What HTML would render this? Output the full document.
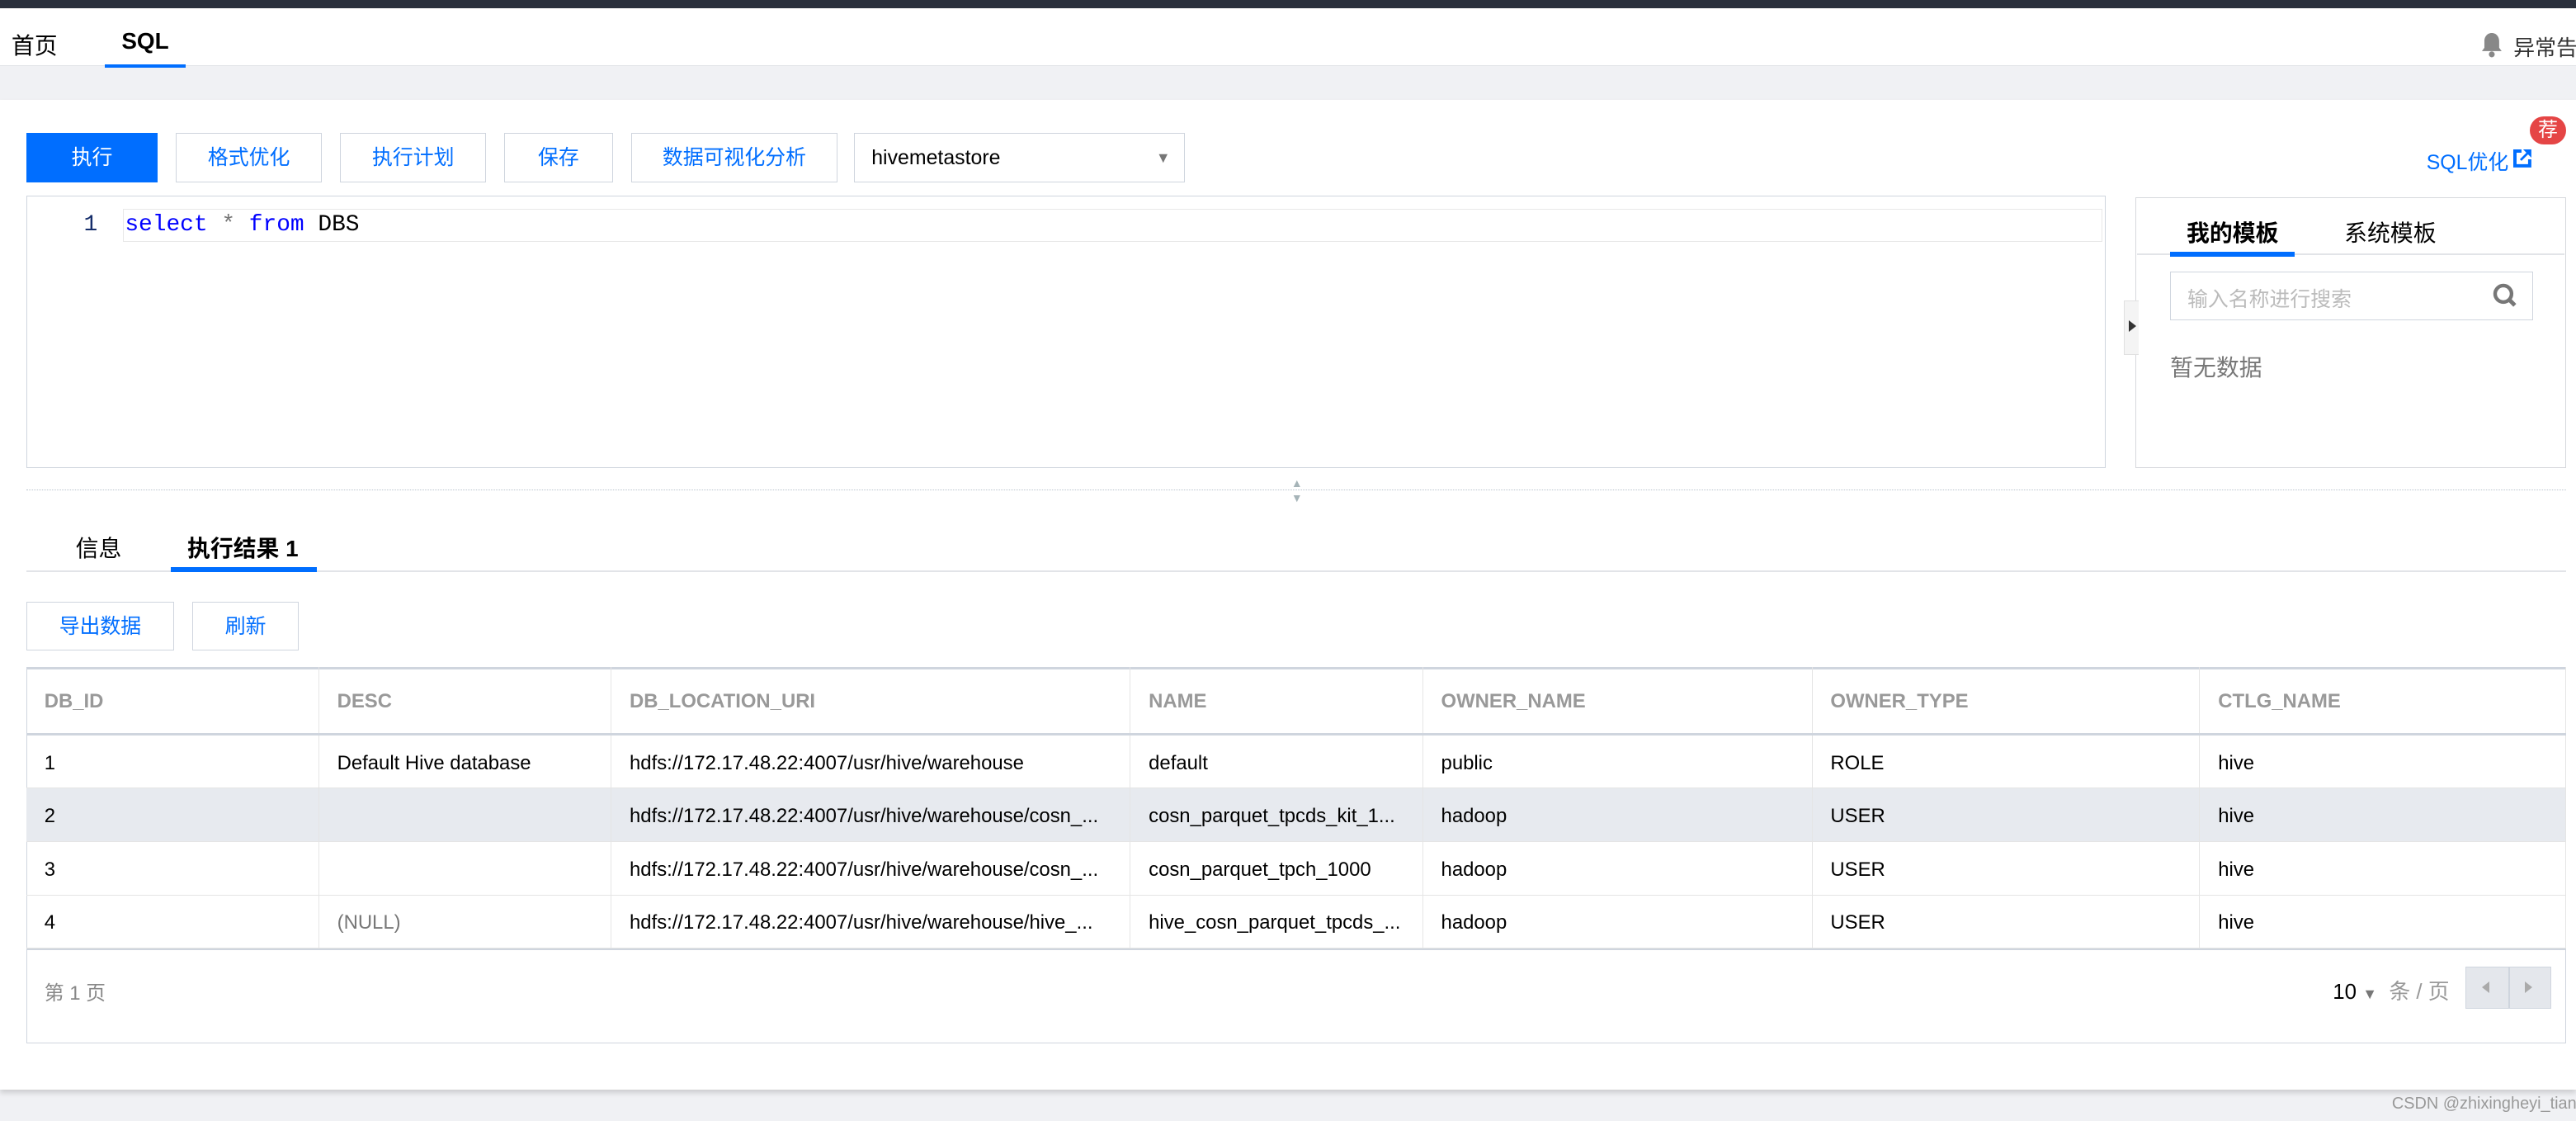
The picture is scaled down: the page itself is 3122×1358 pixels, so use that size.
<!DOCTYPE html>
<html><head><meta charset="utf-8"><style>
*{box-sizing:border-box;margin:0;padding:0}
html,body{width:3122px;height:1358px;overflow:hidden;background:#f0f1f4}
#w{zoom:1.991;position:relative;width:1568px;height:682px;font-family:"Liberation Sans","Noto Sans CJK SC",sans-serif;font-size:13px;color:#000}
.a{position:absolute;white-space:nowrap}
.btn{position:absolute;top:81px;height:30px;border:1px solid #cfd5de;background:#fff;color:#006eff;font-size:12.5px;line-height:30px;text-align:center}
table{border-collapse:collapse;position:absolute;left:16px;top:406px;width:1546px;table-layout:fixed;font-size:12px}
td{border-right:1px solid #e5e5e5;border-bottom:1px solid #e5e5e5;padding-left:11px;height:32.5px;white-space:nowrap;overflow:hidden;padding-top:2px}
tr.h td{height:41px;color:#999;font-weight:bold;border-bottom:2px solid #cfd5de}
</style></head><body><div id="w">
<div class="a" style="left:0;top:0;width:1568px;height:5px;background:#2a303c"></div>
<div class="a" style="left:0;top:5px;width:1568px;height:35px;background:#fff;border-bottom:1px solid #e2e4e8"></div>
<div class="a" style="left:7px;top:17px;font-size:14px">首页</div>
<div class="a" style="left:74px;top:17px;font-size:14px;font-weight:bold">SQL</div>
<div class="a" style="left:64px;top:39px;width:49px;height:2px;background:#006eff"></div>
<svg class="a" style="left:1510px;top:19px" width="14" height="16" viewBox="0 0 14 16"><path d="M7 1c-3 0-4.5 2.5-4.5 5v4L1 12h12l-1.5-2V6C11.5 3.5 10 1 7 1z" fill="#888"/><circle cx="7" cy="14" r="1.8" fill="#888"/></svg>
<div class="a" style="left:1530px;top:19px;font-size:13px;color:#333">异常告警</div>
<div class="a" style="left:0;top:61px;width:1568px;height:602px;background:#fff;box-shadow:0 2px 3px rgba(0,0,0,.15)"></div>
<div class="btn" style="left:16px;width:80px;background:#006eff;border-color:#006eff;color:#fff">执行</div>
<div class="btn" style="left:107px;width:89px">格式优化</div>
<div class="btn" style="left:207px;width:89px">执行计划</div>
<div class="btn" style="left:307px;width:66px">保存</div>
<div class="btn" style="left:384px;width:126px">数据可视化分析</div>
<div class="btn" style="left:520px;width:201px;color:#000;text-align:left;padding-left:10px">hivemetastore<span style="position:absolute;right:8px;top:0;color:#777;font-size:9px">▼</span></div>
<div class="a" style="left:1477px;top:89px;color:#006eff;font-size:12.5px">SQL优化</div>
<svg class="a" style="left:1530px;top:91px" width="11" height="11" viewBox="0 0 11 11"><path d="M0 0h5v2H2v7h7V6h2v5H0z M6 0h5v5L9 3 5 7 4 6l4-4z" fill="#006eff"/></svg>
<div class="a" style="left:1540px;top:71px;width:22px;height:17px;border-radius:9px;background:#e54545;color:#fff;font-size:12px;text-align:center;line-height:17px">荐</div>
<div class="a" style="left:16px;top:119px;width:1266px;height:166px;border:1px solid #cfd5de"></div>
<div class="a" style="left:75px;top:127px;width:1205px;height:20px;border:1px solid #e8e8e8"></div>
<div class="a" style="left:51px;top:129px;font-family:'Liberation Mono',monospace;font-size:14px;color:#152d6a">1</div>
<div class="a" style="left:76px;top:129px;font-family:'Liberation Mono',monospace;font-size:14px"><span style="color:#00f">select</span> <span style="color:#777">*</span> <span style="color:#00f">from</span> DBS</div>
<div class="a" style="left:1300px;top:120px;width:262px;height:165px;border:1px solid #d6d8dc"></div>
<div class="a" style="left:1301px;top:154px;width:260px;height:1px;background:#e2e4e8"></div>
<div class="a" style="left:1331px;top:131px;font-size:14px;font-weight:bold">我的模板</div>
<div class="a" style="left:1427px;top:131px;font-size:14px">系统模板</div>
<div class="a" style="left:1321px;top:153px;width:76px;height:3px;background:#006eff"></div>
<div class="a" style="left:1321px;top:165px;width:221px;height:30px;border:1px solid #cfd5de;color:#bbb;font-size:12.5px;padding:7px 10px">输入名称进行搜索</div>
<svg class="a" style="left:1517px;top:172px" width="16" height="16" viewBox="0 0 16 16"><circle cx="7" cy="7" r="5" stroke="#777" stroke-width="2.2" fill="none"/><path d="M10.5 10.5l3.5 3.5" stroke="#777" stroke-width="2.5"/></svg>
<div class="a" style="left:1321px;top:213px;font-size:14px;color:#777">暂无数据</div>
<div class="a" style="left:1293px;top:183px;width:9px;height:33px;background:#f4f4f4;border:1px solid #e0e0e0;border-right:none"></div>
<div class="a" style="left:1296px;top:195px;width:0;height:0;border-left:5px solid #333;border-top:4px solid transparent;border-bottom:4px solid transparent"></div>
<div class="a" style="left:16px;top:298px;width:1546px;height:0;border-top:1px dotted #b8c2cc"></div>
<div class="a" style="left:786px;top:290px;font-size:7px;color:#a6b4b8">▲</div>
<div class="a" style="left:786px;top:299px;font-size:7px;color:#a6b4b8">▼</div>
<div class="a" style="left:16px;top:347px;width:1546px;height:1px;background:#e2e4e8"></div>
<div class="a" style="left:46px;top:323px;font-size:14px">信息</div>
<div class="a" style="left:114px;top:323px;font-size:14px;font-weight:bold">执行结果 1</div>
<div class="a" style="left:104px;top:345px;width:89px;height:3px;background:#006eff"></div>
<div class="btn" style="left:16px;top:366px;width:90px">导出数据</div>
<div class="btn" style="left:117px;top:366px;width:65px">刷新</div>
<div class="a" style="left:16px;top:406px;width:1546px;height:229px;border:1px solid #cfd5de;border-top:2px solid #cfd5de"></div>
<table>
<colgroup><col style="width:178px"><col style="width:178px"><col style="width:316px"><col style="width:178px"><col style="width:237px"><col style="width:236px"><col></colgroup>
<tr class="h"><td>DB_ID</td><td>DESC</td><td>DB_LOCATION_URI</td><td>NAME</td><td>OWNER_NAME</td><td>OWNER_TYPE</td><td>CTLG_NAME</td></tr>
<tr><td>1</td><td>Default Hive database</td><td>hdfs://172.17.48.22:4007/usr/hive/warehouse</td><td>default</td><td>public</td><td>ROLE</td><td>hive</td></tr>
<tr style="background:#e7eaef"><td>2</td><td></td><td>hdfs://172.17.48.22:4007/usr/hive/warehouse/cosn_...</td><td>cosn_parquet_tpcds_kit_1...</td><td>hadoop</td><td>USER</td><td>hive</td></tr>
<tr><td>3</td><td></td><td>hdfs://172.17.48.22:4007/usr/hive/warehouse/cosn_...</td><td>cosn_parquet_tpch_1000</td><td>hadoop</td><td>USER</td><td>hive</td></tr>
<tr><td>4</td><td style="color:#777">(NULL)</td><td>hdfs://172.17.48.22:4007/usr/hive/warehouse/hive_...</td><td>hive_cosn_parquet_tpcds_...</td><td>hadoop</td><td>USER</td><td>hive</td></tr>
</table>
<div class="a" style="left:16px;top:577px;width:1546px;height:1px;background:#cfd5de"></div>
<div class="a" style="left:27px;top:594px;color:#888;font-size:12px">第 1 页</div>
<div class="a" style="left:1420px;top:593px;font-size:13px">10 <span style="color:#777;font-size:9px">▼</span> <span style="color:#999">&nbsp;条 / 页</span></div>
<div class="a" style="left:1501px;top:588px;width:52px;height:26px;background:#e4e7ec;border:1px solid #cfd5de"></div>
<div class="a" style="left:1527px;top:588px;width:1px;height:26px;background:#cfd5de"></div>
<div class="a" style="left:1511px;top:597px;border-right:5px solid #aaa;border-top:4px solid transparent;border-bottom:4px solid transparent"></div>
<div class="a" style="left:1537px;top:597px;border-left:5px solid #aaa;border-top:4px solid transparent;border-bottom:4px solid transparent"></div>
<div class="a" style="left:1456px;top:666px;font-size:10px;color:#999">CSDN @zhixingheyi_tian</div>
</div></body></html>
